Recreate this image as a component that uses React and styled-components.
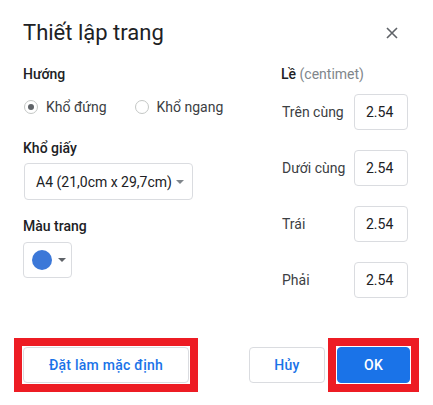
import React from "react";
import styled, { createGlobalStyle } from "styled-components";

const GlobalStyle = createGlobalStyle`
  html, body {
    margin: 0;
    padding: 0;
    background: #ffffff;
  }
  body {
    font-family: Roboto, "Noto Sans", Arial, sans-serif;
    color: #202124;
  }
`;

// Dialog shell
const Dialog = styled.div`
  width: 433px;
  height: 405px;
  box-sizing: border-box;
  display: flex;
  flex-direction: column;
  background: #fff;
  padding: 19px 23px 13px 23px;
`;

const Header = styled.div`
  display: flex;
  align-items: center;
  justify-content: space-between;
  height: 28px;
`;

const Title = styled.h1`
  margin: 0;
  font-size: 22px;
  line-height: 28px;
  font-weight: 400;
  color: #202124;
`;

const CloseButton = styled.button`
  width: 24px;
  height: 24px;
  padding: 0;
  margin-right: 6px;
  border: none;
  background: transparent;
  display: flex;
  align-items: center;
  justify-content: center;
  cursor: pointer;
`;

const Body = styled.div`
  display: grid;
  grid-template-columns: 258px 1fr;
  margin-top: 17px;
`;

const Column = styled.div`
  display: flex;
  flex-direction: column;
`;

const SectionLabel = styled.div`
  font-size: 14px;
  line-height: 20px;
  font-weight: 500;
  color: #202124;
  margin-top: ${(p) => p.$top || 0}px;
`;

const Muted = styled.span`
  font-weight: 400;
  color: #80868b;
`;

const RadioRow = styled.div`
  display: flex;
  align-items: center;
  gap: 27px;
  margin-top: 13px;
  height: 20px;
`;

const RadioOption = styled.label`
  display: flex;
  align-items: center;
  gap: 8px;
  font-size: 14px;
  color: #3c4043;
`;

const RadioCircle = styled.span`
  width: 12px;
  height: 12px;
  margin-left: 1px;
  border: 1px solid #c4c7c5;
  border-radius: 50%;
  display: flex;
  align-items: center;
  justify-content: center;
  &::after {
    content: "";
    width: 6px;
    height: 6px;
    border-radius: 50%;
    background: ${(p) => (p.$checked ? "#5f6368" : "transparent")};
  }
`;

const Select = styled.div`
  margin-top: 5px;
  width: 169px;
  height: 37px;
  box-sizing: border-box;
  border: 1px solid #dadce0;
  border-radius: 4px;
  display: flex;
  align-items: center;
  padding: 0 0 0 11px;
  gap: 4px;
  font-size: 14px;
  color: #202124;
  margin-left: 1px;
`;

const Caret = styled.span`
  width: 0;
  height: 0;
  border-left: 4px solid transparent;
  border-right: 4px solid transparent;
  border-top: 4px solid ${(p) => p.$color || "#80868b"};
`;

const ColorButton = styled.div`
  margin-top: 6px;
  width: 49px;
  height: 36px;
  box-sizing: border-box;
  border: 1px solid #dadce0;
  border-radius: 4px;
  display: flex;
  align-items: center;
  padding-left: 8px;
  gap: 6px;
`;

const Swatch = styled.span`
  width: 20px;
  height: 20px;
  border-radius: 50%;
  background: #3c78d8;
`;

const MarginRow = styled.div`
  display: flex;
  align-items: center;
  height: 36px;
  margin-top: ${(p) => p.$top}px;
`;

const MarginLabel = styled.div`
  width: 72px;
  font-size: 14px;
  color: #3c4043;
  padding-left: 1px;
`;

const MarginInput = styled.div`
  width: 54px;
  height: 36px;
  box-sizing: border-box;
  border: 1px solid #dadce0;
  border-radius: 4px;
  display: flex;
  align-items: center;
  padding-left: 11px;
  font-size: 14px;
  color: #202124;
`;

// footer reaches under the red frames, so it bleeds 9px past the padding
const Footer = styled.div`
  margin: auto -9px 0 -9px;
  display: flex;
  align-items: center;
`;

// red annotation frame drawn around a button
const Highlight = styled.div`
  display: flex;
  flex-shrink: 0;
  border: 8px solid #ed1c24;
  padding: 1px;
  background: #fff;
  margin-left: ${(p) => p.$left || 0}px;
`;

const Button = styled.button`
  flex-shrink: 0;
  height: 36px;
  width: ${(p) => p.$width}px;
  box-sizing: border-box;
  border-radius: 4px;
  font-family: inherit;
  font-size: 14px;
  font-weight: 500;
  letter-spacing: 0.25px;
  border: 1px solid ${(p) => (p.$primary ? "#1a73e8" : "#dadce0")};
  background: ${(p) => (p.$primary ? "#1a73e8" : "#fff")};
  color: ${(p) => (p.$primary ? "#fff" : "#1a73e8")};
  margin-left: ${(p) => p.$left || 0}px;
  cursor: pointer;
`;

const margins = [
  { label: "Trên cùng", value: "2.54" },
  { label: "Dưới cùng", value: "2.54" },
  { label: "Trái", value: "2.54" },
  { label: "Phải", value: "2.54" },
];

export default function App() {
  return (
    <>
      <GlobalStyle />
      <Dialog>
        <Header>
          <Title>Thiết lập trang</Title>
          <CloseButton aria-label="Đóng">
            <svg width="12" height="12" viewBox="0 0 12 12">
              <path d="M1 1L11 11M11 1L1 11" stroke="#5f6368" strokeWidth="1.6" />
            </svg>
          </CloseButton>
        </Header>

        <Body>
          <Column>
            <SectionLabel>Hướng</SectionLabel>
            <RadioRow>
              <RadioOption>
                <RadioCircle $checked />
                Khổ đứng
              </RadioOption>
              <RadioOption>
                <RadioCircle />
                Khổ ngang
              </RadioOption>
            </RadioRow>

            <SectionLabel $top={21}>Khổ giấy</SectionLabel>
            <Select>
              A4 (21,0cm x 29,7cm)
              <Caret />
            </Select>

            <SectionLabel $top={16}>Màu trang</SectionLabel>
            <ColorButton>
              <Swatch />
              <Caret $color="#5f6368" />
            </ColorButton>
          </Column>

          <Column>
            <SectionLabel>
              Lề <Muted>(centimet)</Muted>
            </SectionLabel>
            {margins.map((m, i) => (
              <MarginRow key={m.label} $top={i === 0 ? 10 : 20}>
                <MarginLabel>{m.label}</MarginLabel>
                <MarginInput>{m.value}</MarginInput>
              </MarginRow>
            ))}
          </Column>
        </Body>

        <Footer>
          <Highlight>
            <Button $width={166}>Đặt làm mặc định</Button>
          </Highlight>
          <Button $width={76} $left={51}>Hủy</Button>
          <Highlight $left={3}>
            <Button $width={73} $primary>OK</Button>
          </Highlight>
        </Footer>
      </Dialog>
    </>
  );
}
